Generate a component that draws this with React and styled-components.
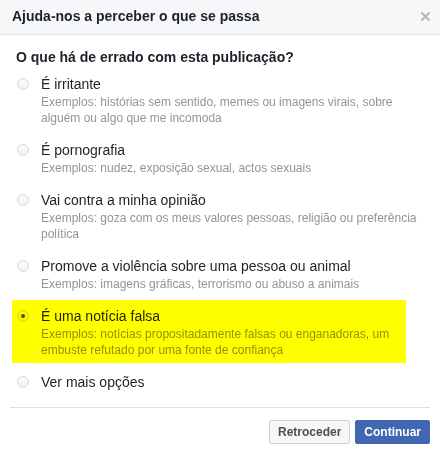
import React from "react";
import styled, { createGlobalStyle, css } from "styled-components";

const Global = createGlobalStyle`
  html, body { margin: 0; padding: 0; background: #fff; }
  body { font-family: "Liberation Sans", Arial, Helvetica, sans-serif; color: #1d2129; }
  * { box-sizing: border-box; }
`;

const Dialog = styled.div`
  width: 440px;
  background: #fff;
`;

const Header = styled.div`
  height: 35px;
  display: flex;
  align-items: center;
  justify-content: space-between;
  padding: 0 10px 2px 12px;
  background: #f6f7f9;
  border-bottom: 1px solid #e5e5e5;
`;

const Title = styled.h2`
  margin: 0;
  font-size: 14px;
  font-weight: bold;
  line-height: 19px;
  color: #1d2129;
`;

const Close = styled.button`
  width: 10px;
  height: 10px;
  padding: 0;
  border: 0;
  background: none;
  display: flex;
  align-items: center;
  justify-content: center;
  cursor: pointer;
`;

const Body = styled.div`
  padding: 13px 34px 0 12px;
`;

const Question = styled.div`
  padding-left: 4px;
  font-size: 14px;
  font-weight: bold;
  line-height: 18px;
  color: #1d2129;
`;

const List = styled.div`
  margin-top: 2px;
  display: flex;
  flex-direction: column;
  gap: 3px;
`;

const Item = styled.label`
  position: relative;
  display: grid;
  grid-template-columns: 12px 1fr;
  column-gap: 12px;
  padding: 7px 5px 5px 5px;
  cursor: pointer;
  ${(p) =>
    p.$highlight &&
    css`
      &::after {
        content: "";
        position: absolute;
        inset: 0;
        background: #ffff00;
        mix-blend-mode: multiply;
        pointer-events: none;
      }
    `}
`;

const Radio = styled.span`
  width: 12px;
  height: 12px;
  margin-top: 3px;
  border-radius: 50%;
  border: 1px solid #d8dadd;
  background: linear-gradient(#fdfdfd, #f0f1f3);
  box-shadow: inset 0 1px 1px rgba(0, 0, 0, 0.03);
  display: flex;
  align-items: center;
  justify-content: center;
  ${(p) =>
    p.$checked &&
    css`
      &::before {
        content: "";
        width: 4px;
        height: 4px;
        border-radius: 50%;
        background: #4b4f56;
      }
    `}
`;

const Texts = styled.div`
  display: flex;
  flex-direction: column;
  gap: 1px;
`;

const Label = styled.span`
  font-size: 14px;
  line-height: 18px;
  color: #1d2129;
`;

const Examples = styled.span`
  margin-right: -18px;
  font-size: 12px;
  line-height: 16px;
  color: #90949c;
`;

const Footer = styled.div`
  margin: 11px 10px 0 10px;
  padding: 12px 0 10px;
  border-top: 1px solid #dddfe2;
  display: flex;
  justify-content: flex-end;
  gap: 5px;
`;

const Button = styled.button`
  height: 24px;
  padding: 0 8px;
  border-radius: 2px;
  font-family: "Liberation Sans", Arial, Helvetica, sans-serif;
  font-size: 12px;
  font-weight: bold;
  line-height: 22px;
  cursor: pointer;
  border: 1px solid ${(p) => (p.$primary ? "#4267b2" : "#ced0d4")};
  background: ${(p) => (p.$primary ? "#4267b2" : "#f6f7f9")};
  color: ${(p) => (p.$primary ? "#fff" : "#4b4f56")};
`;

const options = [
  {
    label: "É irritante",
    ex: "Exemplos: histórias sem sentido, memes ou imagens virais, sobre alguém ou algo que me incomoda",
  },
  { label: "É pornografia", ex: "Exemplos: nudez, exposição sexual, actos sexuais" },
  {
    label: "Vai contra a minha opinião",
    ex: "Exemplos: goza com os meus valores pessoas, religião ou preferência política",
  },
  {
    label: "Promove a violência sobre uma pessoa ou animal",
    ex: "Exemplos: imagens gráficas, terrorismo ou abuso a animais",
  },
  {
    label: "É uma notícia falsa",
    ex: "Exemplos: notícias propositadamente falsas ou enganadoras, um embuste refutado por uma fonte de confiança",
    selected: true,
  },
  { label: "Ver mais opções" },
];

export default function App() {
  return (
    <Dialog>
      <Global />
      <Header>
        <Title>Ajuda-nos a perceber o que se passa</Title>
        <Close aria-label="Fechar">
          <svg width="9" height="9" viewBox="0 0 9 9">
            <path d="M1 1 L8 8 M8 1 L1 8" stroke="#b4b7bc" strokeWidth="2" strokeLinecap="square" />
          </svg>
        </Close>
      </Header>
      <Body>
        <Question>O que há de errado com esta publicação?</Question>
        <List>
          {options.map((o) => (
            <Item key={o.label} $highlight={o.selected}>
              <Radio $checked={o.selected} />
              <Texts>
                <Label>{o.label}</Label>
                {o.ex && <Examples>{o.ex}</Examples>}
              </Texts>
            </Item>
          ))}
        </List>
      </Body>
      <Footer>
        <Button>Retroceder</Button>
        <Button $primary>Continuar</Button>
      </Footer>
    </Dialog>
  );
}
